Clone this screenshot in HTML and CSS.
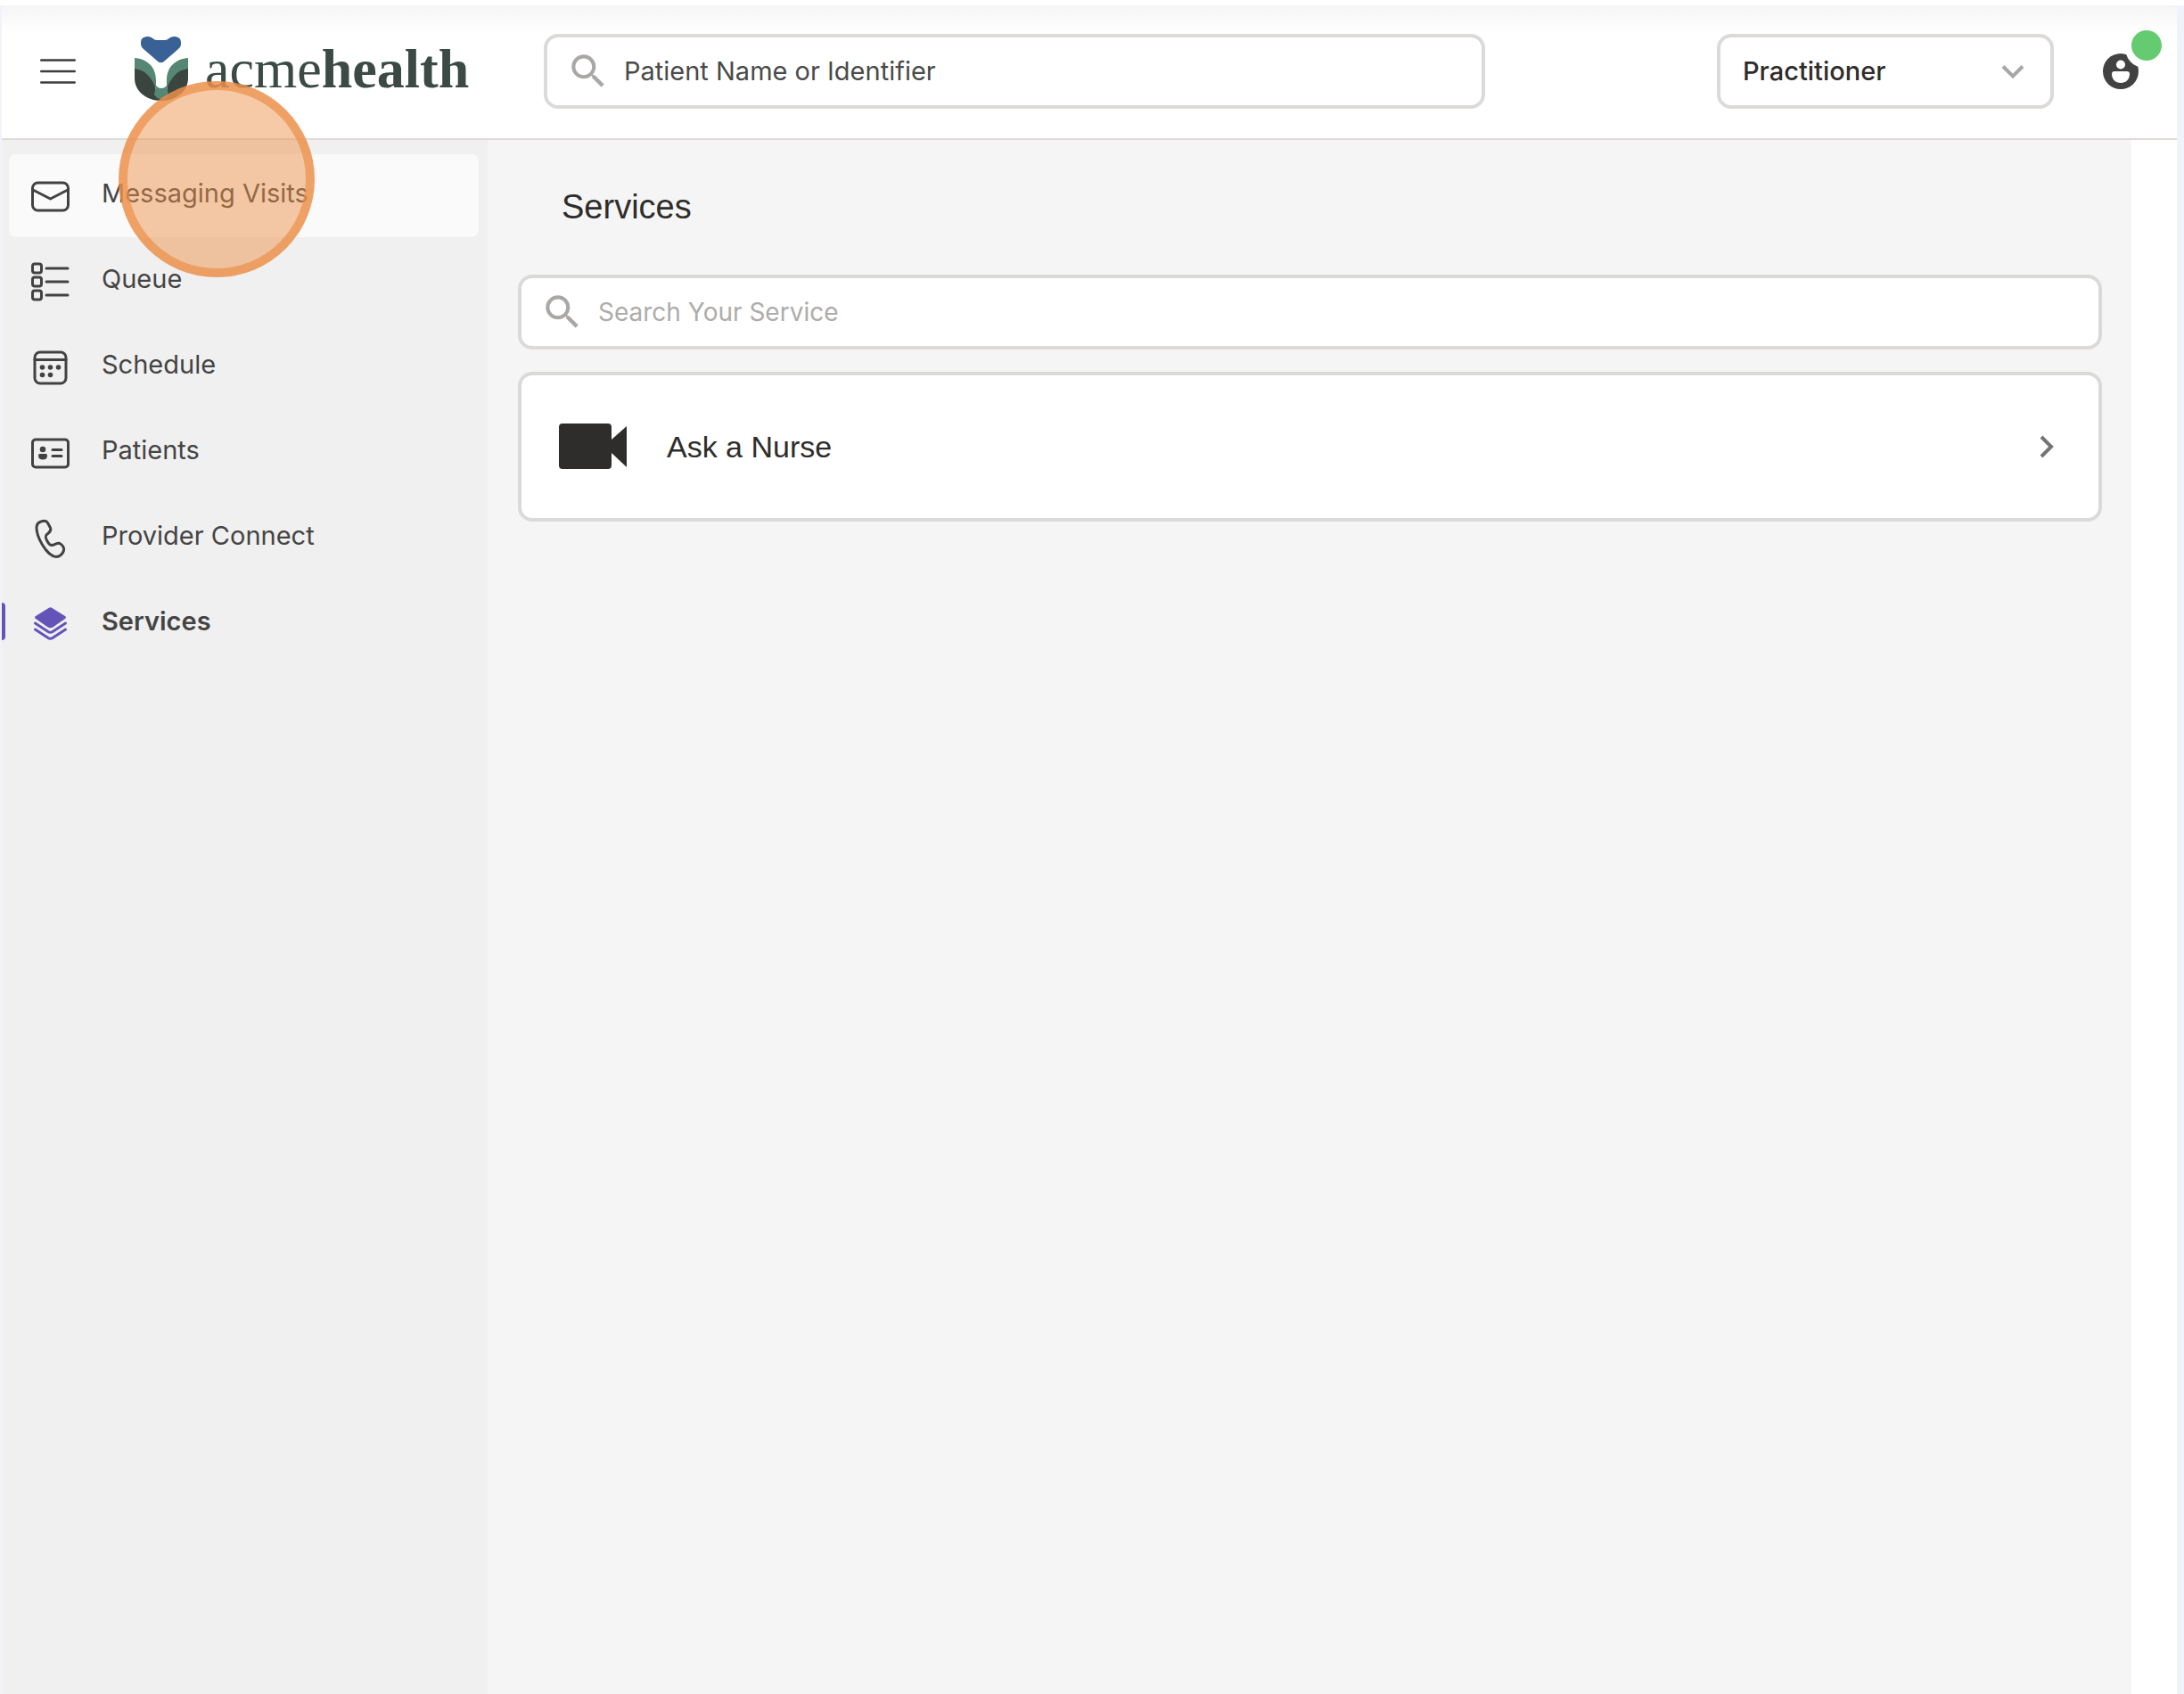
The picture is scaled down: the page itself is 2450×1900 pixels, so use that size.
FILE: index.html
```html
<!DOCTYPE html>
<html lang="en">
<head>
  <meta charset="utf-8">
  <title>Services - acmehealth</title>
  <link rel="stylesheet" href="styles.css">
</head>
<body>
  <div class="window">
    <header class="topbar">
      <button class="menu-button" type="button" aria-label="Toggle menu">
        <svg width="40" height="30" viewBox="0 0 40 30" stroke="#3c3c3c" stroke-width="2.6" stroke-linecap="round">
          <path d="M1.3 2.5H38.7M1.3 15H38.7M1.3 27.5H38.7"/>
        </svg>
      </button>

      <a class="logo" href="#" aria-label="acmehealth home">
        <svg width="62" height="74" viewBox="0 0 62 74">
          <path fill="#386196" d="M8 8C8 3 11 1 16 1C21 1 22 5 26 5H35C39 5 40 1 45 1C50 1 53 3 53 8C53 12 52 13 50 15L35 28C32 31 29 31 26 28L11 15C9 13 8 12 8 8Z"/>
          <path fill="#3a453f" d="M1 36V48C1 62 14 73 31 73C48 73 61 62 61 48V36L38 44V60H24V44Z"/>
          <path fill="#568674" d="M1 25C14 26 25 34 25 50V60C21 48 13 38 1 37Z"/>
          <path fill="#568674" d="M61 25C48 26 37 34 37 50V60C41 48 49 38 61 37Z"/>
          <path fill="#568674" d="M25 56C28 60 34 60 37 56L39 66C36 73 27 73 23 66Z"/>
        </svg>
        <span class="logo-text">acme<b>health</b></span>
      </a>

      <div class="search-box patient-search">
        <svg class="search-icon" viewBox="0 0 24 24"><path d="M15.5 14h-.79l-.28-.27A6.47 6.47 0 0 0 16 9.5 6.5 6.5 0 1 0 9.5 16c1.61 0 3.09-.59 4.23-1.57l.27.28v.79l5 4.99L20.49 19l-4.99-5zm-6 0C7.01 14 5 11.99 5 9.5S7.01 5 9.5 5 14 7.01 14 9.5 11.99 14 9.5 14z"/></svg>
        <input type="text" placeholder="Patient Name or Identifier" aria-label="Patient Name or Identifier">
      </div>

      <div class="role">
        <select class="role-select" aria-label="Role">
          <option>Practitioner</option>
        </select>
        <svg class="role-arrow" width="26" height="18" viewBox="0 0 26 18" fill="none" stroke="#a9a7a5" stroke-width="4">
          <path d="M2 2.5L13 13.5L24 2.5"/>
        </svg>
      </div>

      <button class="account" type="button" aria-label="Account">
        <svg width="40" height="40" viewBox="0 0 40 40">
          <circle cx="20" cy="20" r="20" fill="#424242"/>
          <circle cx="20" cy="12.500" r="5" fill="#fff"/>
          <path fill="#fff" d="M13 20H27C29 20 30 21 30 23C30 29 26 33 20 33C14 33 10 29 10 23C10 21 11 20 13 20Z"/>
          <path fill="#fff" d="M26 0C28 7 32 12 40 15V0Z"/>
        </svg>
        <span class="status-dot"></span>
      </button>
    </header>

    <div class="layout">
      <nav class="sidebar">
        <a class="nav-item hovered" href="#">
          <svg class="nav-icon" viewBox="0 0 48 48">
            <rect x="3.500" y="9" width="40" height="31" rx="6"/>
            <path d="M4 17L23.500 27L43 17"/>
          </svg>
          <span>Messaging Visits</span>
        </a>
        <a class="nav-item" href="#">
          <svg class="nav-icon" viewBox="0 0 48 48">
            <rect x="3.500" y="4" width="10" height="10" rx="2.500"/>
            <rect x="3.500" y="19" width="10" height="10" rx="2.500"/>
            <rect x="3.500" y="34" width="10" height="10" rx="2.500"/>
            <path d="M19 9H43M19 24H43M19 39H43"/>
          </svg>
          <span>Queue</span>
        </a>
        <a class="nav-item" href="#">
          <svg class="nav-icon" viewBox="0 0 48 48">
            <rect x="6" y="7" width="35" height="35" rx="6"/>
            <path d="M6 15.500H41"/>
            <g class="solid">
              <circle cx="14.500" cy="24" r="2.800"/>
              <circle cx="23.500" cy="24" r="2.800"/>
              <circle cx="32.500" cy="24" r="2.800"/>
              <circle cx="14.500" cy="32.500" r="2.800"/>
              <circle cx="23.500" cy="32.500" r="2.800"/>
            </g>
          </svg>
          <span>Schedule</span>
        </a>
        <a class="nav-item" href="#">
          <svg class="nav-icon" viewBox="0 0 48 48">
            <rect x="3.500" y="9" width="40" height="31" rx="3.500"/>
            <path d="M26 20.500H36M26 27.500H36"/>
            <g class="solid">
              <circle cx="15" cy="20" r="3.300"/>
              <path d="M11.500 25H18.500Q20 25 20 27Q20 31.500 15 31.500Q10 31.500 10 27Q10 25 11.500 25Z"/>
            </g>
          </svg>
          <span>Patients</span>
        </a>
        <a class="nav-item" href="#">
          <svg class="nav-icon" viewBox="0 0 48 48">
            <path d="M13 5C16 4 19 4 20.500 6.500L23.500 12C25 15 22.500 17 19.500 19.500C17.500 21.500 18 23 19.500 26C21 29 23 31.500 25 31.500C28 31.500 31 28.500 34 29.500C37 31 39.500 34.500 38.500 37.500C37.500 41 34 44.500 30 44.500C24 44.500 17.500 36 14.500 31C11.500 26 8 18 8 12C8 8.500 10 6 13 5Z"/>
          </svg>
          <span>Provider Connect</span>
        </a>
        <a class="nav-item current" href="#" aria-current="page">
          <svg class="nav-icon" viewBox="0 0 48 48">
            <path class="solid" d="M21.500 6Q23.500 4.500 25.500 6L40 15Q42 16.500 40 18L27 27Q23.500 29.500 20 27L7 18Q5 16.500 7 15Z"/>
            <path d="M6.500 23L21 32.500Q23.500 34 26 32.500L40.500 23M6.500 30L21 39.500Q23.500 41 26 39.500L40.500 30"/>
          </svg>
          <span>Services</span>
        </a>
      </nav>

      <main class="content">
        <h1>Services</h1>
        <div class="search-box service-search">
          <svg class="search-icon" viewBox="0 0 24 24"><path d="M15.5 14h-.79l-.28-.27A6.47 6.47 0 0 0 16 9.5 6.5 6.5 0 1 0 9.5 16c1.61 0 3.09-.59 4.23-1.57l.27.28v.79l5 4.99L20.49 19l-4.99-5zm-6 0C7.01 14 5 11.99 5 9.5S7.01 5 9.5 5 14 7.01 14 9.5 11.99 14 9.5 14z"/></svg>
          <input type="text" placeholder="Search Your Service" aria-label="Search Your Service">
        </div>
        <a class="service-card" href="#">
          <svg width="76" height="52" viewBox="0 0 76 52" fill="#2f2d2b">
            <path d="M4 0H55Q59 0 59 4V18L76 3V49L59 33V47Q59 51 55 51H4Q0 51 0 47V4Q0 0 4 0Z"/>
          </svg>
          <span class="service-name">Ask a Nurse</span>
          <svg width="16" height="26" viewBox="0 0 16 26" fill="none" stroke="#767472" stroke-width="4">
            <path d="M2 2L13 13L2 24"/>
          </svg>
        </a>
      </main>
    </div>
  </div>
  <div class="click-marker"></div>
</body>
</html>
```
FILE: styles.css
```css
/* General */
* {
    box-sizing: border-box;
}

body {
    margin: 0;
    min-height: 100vh;
    display: flex;
    padding: 0 8px 0 2px;
    border-top: 6px solid #fff;
    background-color: #f0f4fa;
    font-family: Inter, 'Liberation Sans', sans-serif;
    font-size: 29px;
    color: #444;
}

button {
    padding: 0;
    border: none;
    background: none;
    cursor: pointer;
}

a {
    color: inherit;
    text-decoration: none;
}

svg {
    display: block;
    flex-shrink: 0;
}

.window {
    flex: 1;
    display: flex;
    flex-direction: column;
    background-color: #fff;
    border-radius: 8px 8px 0 0;
    overflow: hidden;
}

/* Top bar */
.topbar {
    display: flex;
    align-items: center;
    height: 151px;
    padding: 0 43px 2px;
    border-bottom: 2px solid #dfdbd7;
    background: linear-gradient(#f5f5f5, #fff 30px);
}

.logo {
    display: flex;
    align-items: center;
    gap: 18px;
    width: 372px;
    margin: 0 88px 0 65px;
    padding-bottom: 5px;
}

.logo-text {
    font-family: 'Liberation Serif', serif;
    font-size: 62px;
    line-height: 60px;
    color: #3b4a44;
}

/* Search fields */
.search-box {
    display: flex;
    align-items: center;
    gap: 15px;
    height: 84px;
    padding: 0 20px 0 21px;
    border: 4px solid #dcdad8;
    border-radius: 16px;
    background-color: #fff;
}

.search-box input {
    flex: 1;
    min-width: 0;
    padding: 0;
    border: none;
    outline: none;
    background: none;
    font: inherit;
    color: #444;
}

.search-box input::placeholder {
    color: #aeacaa;
    opacity: 1;
}

.search-icon {
    width: 50px;
    height: 50px;
    fill: #aaa8a6;
}

.patient-search {
    flex: 1;
    margin-right: 260px;
}

.patient-search input::placeholder {
    color: #4a4a4a;
}

.service-search {
    font-size: 28px;
}

/* Role drop-down */
.role {
    position: relative;
    width: 378px;
    margin-right: 55px;
}

.role-select {
    display: block;
    width: 100%;
    height: 84px;
    padding: 0 25px;
    appearance: none;
    border: 4px solid #dcdad8;
    border-radius: 16px;
    background-color: #fff;
    font: inherit;
    font-weight: 500;
    color: #2f2d2b;
}

.role-arrow {
    position: absolute;
    top: 34px;
    right: 33px;
    pointer-events: none;
}

/* Account */
.account {
    position: relative;
}

.status-dot {
    position: absolute;
    top: -26px;
    right: -26px;
    width: 34px;
    height: 34px;
    border-radius: 50%;
    background-color: #65cb70;
}

/* Page layout */
.layout {
    flex: 1;
    display: grid;
    grid-template-columns: 545px 1fr;
    padding-right: 51px;
}

.sidebar {
    display: flex;
    flex-direction: column;
    gap: 3px;
    padding: 16px 10px 0 8px;
    background-color: #f0f0f0;
}

.nav-item {
    position: relative;
    display: flex;
    align-items: center;
    gap: 33px;
    height: 93px;
    padding-left: 23px;
    border-radius: 8px;
}

.nav-item span {
    padding-bottom: 6px;
}

.nav-item.hovered {
    background-color: #fafafa;
}

.nav-item.current {
    font-weight: 600;
}

.nav-item.current::before {
    content: "";
    position: absolute;
    top: 23px;
    left: -8px;
    width: 4px;
    height: 42px;
    border-radius: 0 4px 4px 0;
    background-color: #6554b8;
}

.nav-icon {
    width: 48px;
    height: 48px;
    fill: none;
    stroke: #424242;
    stroke-width: 3;
    stroke-linecap: round;
    stroke-linejoin: round;
}

.nav-icon .solid {
    fill: #424242;
    stroke: none;
}

.current .nav-icon {
    stroke: #6554b8;
}

.current .nav-icon .solid {
    fill: #6554b8;
}

/* Services */
.content {
    padding: 53px 33px 0 34px;
    background-color: #f5f5f5;
}

.content h1 {
    margin: 0 0 54px;
    padding-left: 49px;
    font-family: 'Liberation Sans', sans-serif;
    font-size: 38px;
    font-weight: 400;
    line-height: 44px;
    color: #2f2d2b;
}

.service-card {
    display: flex;
    align-items: center;
    gap: 45px;
    height: 168px;
    margin-top: 25px;
    padding: 0 50px 0 42px;
    border: 4px solid #dcdad8;
    border-radius: 16px;
    background-color: #fff;
}

.service-name {
    flex: 1;
    font-family: 'Liberation Sans', sans-serif;
    font-size: 34px;
    color: #2f2d2b;
}

/* Click marker drawn over the page */
.click-marker {
    position: absolute;
    top: 91px;
    left: 133px;
    width: 220px;
    height: 220px;
    border: 10px solid rgba(236, 144, 72, 0.7);
    border-radius: 50%;
    background-color: rgba(236, 144, 72, 0.48);
    pointer-events: none;
}
```
